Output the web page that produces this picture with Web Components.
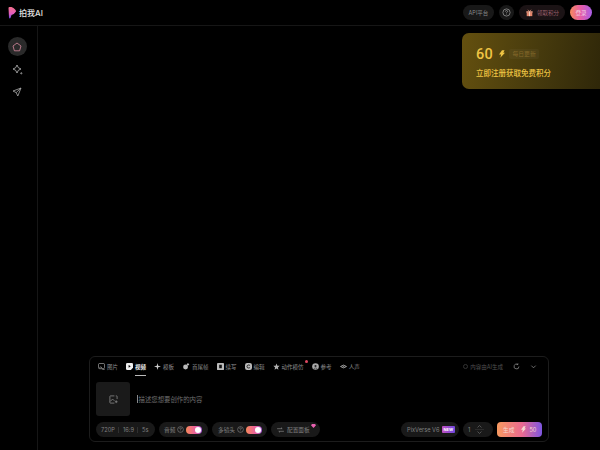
<!DOCTYPE html>
<html>
<head>
<meta charset="utf-8">
<style>
  html, body { margin: 0; height: 100%; background: #000; overflow: hidden; }
  body { font-family: Inter, "Noto Sans CJK SC", sans-serif; color: #fff; }
</style>
</head>
<body>
<template id="tpl-header">
  <style>
    :host { display: flex; align-items: center; height: 25px; border-bottom: 1px solid #161616; padding: 0 8px; box-sizing: content-box; }
    .logo { display: flex; align-items: center; gap: 3px; font-size: 8px; font-weight: 500; color: #e4e4e4; }
    .right { margin-left: auto; display: flex; align-items: center; gap: 5px; font-size: 5.5px; white-space: nowrap; }
    .pill { height: 15px; border-radius: 8px; background: #181818; color: #8a8a8a; display: flex; align-items: center; box-sizing: border-box; }
    .api { width: 31px; justify-content: center; }
    .help { width: 15px; justify-content: center; }
    .gift { background: #1b1315; color: #9c5f6c; padding: 0 6px 0 7px; gap: 4px; }
    .login { height: 15px; width: 22px; border-radius: 8px; background: linear-gradient(90deg, #f7895e, #e65ca8 50%, #a95ee8); color: #f3d6e2; display: flex; align-items: center; justify-content: center; }
  </style>
  <div class="logo">
    <svg width="8" height="12" viewBox="0 0 8 12"><defs><linearGradient id="lg" x1="0" y1="0" x2="0" y2="1"><stop offset="0" stop-color="#f5708a"/><stop offset=".6" stop-color="#e25cc0"/><stop offset="1" stop-color="#6a4ae0"/></linearGradient></defs><path d="M.5 1 Q.5 0 1.5 0 L3.5 0 Q8 2 8 4.5 Q6.5 7 3.5 8 L2.5 11 Q1.5 12 1 10.5 Z" fill="url(#lg)"/></svg>
    <span>拍我AI</span>
  </div>
  <div class="right">
    <div class="pill api">API平台</div>
    <div class="pill help"><svg width="9" height="9" viewBox="0 0 10 10" fill="none" stroke="#a0a0a0" stroke-width=".8"><circle cx="5" cy="5" r="4"/><path d="M3.8 4 Q3.8 2.8 5 2.8 Q6.2 2.8 6.2 3.9 Q6.2 4.6 5 5.2 V5.9"/><path d="M5 7 V7.5"/></svg></div>
    <div class="pill gift"><svg width="7" height="8" viewBox="0 0 10 10"><rect x="1" y="4" width="8" height="5.5" fill="#e4846a"/><rect x=".5" y="2.5" width="9" height="2" fill="#ec9a80"/><rect x="4.2" y="2.5" width="1.6" height="7" fill="#f5d0c0"/><path d="M5 2.5 L2.5 .5 M5 2.5 L7.5 .5" stroke="#ec9a80"/></svg><span>领取积分</span></div>
    <div class="login">登录</div>
  </div>
</template>

<template id="tpl-sidebar">
  <style>
    :host { display: flex; flex-direction: column; align-items: center; width: 34px; padding: 11px 3px 0 0; border-right: 1px solid #161616; gap: 3.5px; box-sizing: content-box; flex: none; }
    .item { width: 19px; height: 19px; border-radius: 50%; display: flex; align-items: center; justify-content: center; }
    .active { background: #2a2a2a; }
  </style>
  <div class="item active"><svg width="10" height="10" viewBox="0 0 10 10" fill="none" stroke="#d98aa0" stroke-width=".8"><path d="M5 1 L9 4 L7.6 8.8 H2.4 L1 4 Z" stroke-linejoin="round"/></svg></div>
  <div class="item"><svg width="11" height="11" viewBox="0 0 11 11" fill="none" stroke="#bbb" stroke-width=".8"><path d="M5 1 Q5.6 4.4 9 5 Q5.6 5.6 5 9 Q4.4 5.6 1 5 Q4.4 4.4 5 1 Z"/><circle cx="9.3" cy="9.3" r=".6"/></svg></div>
  <div class="item"><svg width="10" height="10" viewBox="0 0 10 10" fill="none" stroke="#aaa" stroke-width=".8" stroke-linejoin="round"><path d="M9 1 L1 4 L4.2 5.6 L5.8 9 Z M9 1 L4.2 5.6"/></svg></div>
</template>

<template id="tpl-card">
  <style>
    :host { display: block; width: 138px; height: 56px; box-sizing: border-box; border-radius: 7px 0 0 7px; background: linear-gradient(100deg, #64500f 0%, #463a0d 55%, #2f2709 100%); padding: 13px 0 0 14px; color: #f0c544; }
    .top { display: flex; align-items: center; height: 16px; }
    .num { font-family: Roboto, sans-serif; font-size: 14.5px; font-weight: 500; letter-spacing: .3px; width: 16px; }
    svg { margin-left: 7px; }
    .tag { margin-left: 4px; font-size: 5.8px; height: 10px; line-height: 10px; padding: 0 3.5px; background: rgba(255,255,255,.035); border-radius: 2px; color: #85692a; white-space: nowrap; }
    .sub { font-size: 7.5px; font-weight: 500; margin-top: 5px; }
  </style>
  <div class="top"><span class="num">60</span>
    <svg width="6" height="8" viewBox="0 0 7 9"><path d="M3.5 0 H6.5 L5 3 H7 L1.5 9 L2.5 5 H0 Z" fill="#f0c544"/></svg>
    <span class="tag">每日更新</span></div>
  <div class="sub">立即注册获取免费积分</div>
</template>

<template id="tpl-tab">
  <style>
    :host { display: flex; align-items: center; gap: 2px; font-size: 5.5px; color: #8e8e8e; position: relative; height: 100%; white-space: nowrap; }
    :host([active]) { color: #e8e8e8; font-weight: 600; }
    :host([active])::after { content: ""; position: absolute; left: 9px; right: 0; bottom: 0; height: 1px; background: #bbb; }
    :host([dot])::before { content: ""; position: absolute; width: 3px; height: 3px; border-radius: 50%; background: #e04860; top: 3px; right: -4px; }
    ::slotted(svg) { display: block; }
  </style>
  <slot name="icon"></slot><slot></slot>
</template>

<template id="tpl-chip">
  <style>
    :host { display: flex; align-items: center; height: 15px; border-radius: 8px; background: #191919; color: #808080; font-size: 5.7px; padding: 0 5px; gap: 2px; position: relative; box-sizing: border-box; flex: none; white-space: nowrap; }
    :host(.wide) { padding: 0 5px 0 6px; }
    :host(.panel) { padding-left: 6px; gap: 3px; }
  </style>
  <slot></slot>
</template>

<template id="tpl-toggle">
  <style>
    :host { display: block; width: 16px; height: 8px; border-radius: 4px; background: linear-gradient(90deg, #f8895a, #e860a0 60%, #a85ad8); position: relative; }
    :host::after { content: ""; position: absolute; width: 6px; height: 6px; right: 1px; top: 1px; border-radius: 50%; background: #fff; }
  </style>
</template>

<template id="tpl-composer">
  <style>
    :host { display: block; width: 460px; height: 86px; box-sizing: border-box; border: 1px solid #1c1c1c; border-radius: 6px; margin: 0 0 8px 51px; flex: none; }
    .tabs { display: flex; align-items: center; height: 19px; gap: 8px; padding: 0 8px; }
    .ai { margin-left: auto; display: flex; align-items: center; gap: 2.5px; font-size: 5.5px; color: #505050; white-space: nowrap; }
    .ai i { width: 5px; height: 5px; border: .7px solid #333; border-radius: 50%; display: block; box-sizing: border-box; }
    .tools { display: flex; align-items: center; gap: 10px; margin-left: 2px; padding-right: 3px; }
    .body { display: flex; gap: 7px; margin-top: 6px; height: 34px; padding: 0 6px; }
    .thumb { width: 34px; height: 34px; border-radius: 3px; background: #1a1a1a; display: flex; align-items: center; justify-content: center; flex: none; }
    .prompt { display: flex; align-items: center; height: 34px; font-size: 6.4px; color: #6e6e6e; }
    .prompt b { display: block; width: 1px; height: 8px; background: #888; margin-right: .5px; }
    .bottom { display: flex; align-items: center; margin-top: 6px; gap: 4px; padding: 0 6px; }
    .sep { width: 1px; height: 6px; background: #303030; margin: 0 1.5px; }
    .spacer { flex: 1; }
    .new { font-size: 4px; font-weight: 700; color: #fff; padding: 0 2px; height: 7px; width: 13px; box-sizing: border-box; text-align: center; line-height: 7px; border-radius: 1px; background: linear-gradient(90deg, #c050c0, #7048e0); }
    .count { justify-content: space-between; padding: 0 9px 0 5px; }
    .arrows { display: flex; flex-direction: column; align-items: center; gap: 1.5px; }
    .arrows i { display: block; height: .6px; width: 9px; background: #2c2c2c; }
    .arrows svg { display: block; }
    .gen { height: 15px; width: 45px; border-radius: 4px; background: linear-gradient(90deg, #f79a60, #ea6a90 55%, #7d56e0); color: #f6d8d0; font-size: 5.7px; display: flex; align-items: center; padding-left: 6px; box-sizing: border-box; flex: none; }
    .cost { display: flex; align-items: center; gap: 3px; margin-left: 7px; }
    .badge { position: absolute; top: 2px; right: 4px; }
  </style>
  <div class="tabs">
    <x-tab><svg slot="icon" width="7" height="7" viewBox="0 0 8 8" fill="none" stroke="#aaa" stroke-width=".8"><rect x=".5" y=".5" width="7" height="6" rx="1.5"/><path d="M1.5 6 L3 4.2 L4.8 6"/><path d="M5 7.6 H7.6"/></svg>图片</x-tab>
    <x-tab active><svg slot="icon" width="7" height="7" viewBox="0 0 8 8"><path d="M1.5 0 H6.5 Q8 0 8 1.5 V5.5 L5.5 8 H1.5 Q0 8 0 6.5 V1.5 Q0 0 1.5 0 Z" fill="#eee"/><path d="M3 2.2 L5.4 3.8 L3 5.4 Z" fill="#000"/></svg>视频</x-tab>
    <x-tab><svg slot="icon" width="7" height="7" viewBox="0 0 8 8" fill="#ccc"><path d="M4 0 L4.8 3.2 L8 4 L4.8 4.8 L4 8 L3.2 4.8 L0 4 L3.2 3.2 Z"/></svg>模板</x-tab>
    <x-tab><svg slot="icon" width="8" height="7" viewBox="0 0 8 8" fill="#bbb"><circle cx="3.5" cy="4.5" r="2.8"/><path d="M6.2 0 L7.8 1.6 L6.2 3.2 L4.6 1.6 Z"/></svg>首尾帧</x-tab>
    <x-tab><svg slot="icon" width="7" height="7" viewBox="0 0 8 8"><rect width="8" height="8" rx="1" fill="#bbb"/><rect x="2.5" y="2" width="3" height="4" fill="#111"/></svg>续写</x-tab>
    <x-tab><svg slot="icon" width="7" height="7" viewBox="0 0 8 8"><rect width="8" height="8" rx="2.5" fill="#bbb"/><path d="M5.8 3 Q5 2.2 3.8 2.3 Q2.3 2.6 2.3 4 Q2.3 5.6 3.8 5.7 Q5 5.8 5.8 5" fill="none" stroke="#111"/></svg>编辑</x-tab>
    <x-tab dot><svg slot="icon" width="7" height="7" viewBox="0 0 8 8" fill="#b0b0b0"><path d="M4 .5 L5 3 L7.6 3.2 L5.6 5 L6.2 7.6 L4 6.2 L1.8 7.6 L2.4 5 L.4 3.2 L3 3 Z"/></svg>动作模仿</x-tab>
    <x-tab><svg slot="icon" width="7" height="7" viewBox="0 0 8 8"><circle cx="4" cy="4" r="3.8" fill="#a8a8a8"/><circle cx="4" cy="3.4" r="1.2" fill="#222"/><path d="M2 6.4 Q4 4.8 6 6.4" fill="none" stroke="#222" stroke-width=".7"/></svg>参考</x-tab>
    <x-tab><svg slot="icon" width="7" height="7" viewBox="0 0 8 8" fill="none" stroke="#b0b0b0" stroke-width="1"><path d="M.6 4 Q4 .8 7.4 4 Q4 7.2 .6 4 Z"/><circle cx="4" cy="4" r=".4"/></svg>人声</x-tab>
    <div class="ai"><i></i>内容由AI生成</div>
    <div class="tools">
      <svg width="7" height="7" viewBox="0 0 8 8" fill="none" stroke="#999" stroke-width=".8"><path d="M6.8 4 A2.8 2.8 0 1 1 5.5 1.6 M5.6 .4 V1.8 H4.2"/></svg>
      <svg width="7" height="7" viewBox="0 0 8 8" fill="none" stroke="#999" stroke-width=".8"><path d="M1.5 3 L4 5.5 L6.5 3"/></svg>
    </div>
  </div>
  <div class="body">
    <div class="thumb"><svg width="9" height="9" viewBox="0 0 10 10" fill="none" stroke="#888" stroke-width=".9"><path d="M6 1 H1.5 Q1 1 1 1.5 V8.5 Q1 9 1.5 9 H6 M9 4.5 V1.5 Q9 1 8.5 1 H7.5"/><path d="M1.5 7 L4 4.5 L6 6.5"/><path d="M8 6 V9 M6.5 7.5 H9.5"/></svg></div>
    <div class="prompt"><b></b>描述您想要创作的内容</div>
  </div>
  <div class="bottom">
    <x-chip style="width:59px">720P<span class="sep"></span>16:9<span class="sep"></span>5s</x-chip>
    <x-chip style="width:49px">音频<svg width="7" height="7" viewBox="0 0 8 8" fill="none" stroke="#888" stroke-width=".7"><circle cx="4" cy="4" r="3.3"/><path d="M3 3.2 Q3 2.2 4 2.2 Q5 2.2 5 3.1 Q5 3.7 4 4.2 V4.8 M4 5.5 V6"/></svg><x-toggle></x-toggle></x-chip>
    <x-chip class="wide" style="width:55px">多镜头<svg width="7" height="7" viewBox="0 0 8 8" fill="none" stroke="#888" stroke-width=".7"><circle cx="4" cy="4" r="3.3"/><path d="M3 3.2 Q3 2.2 4 2.2 Q5 2.2 5 3.1 Q5 3.7 4 4.2 V4.8 M4 5.5 V6"/></svg><x-toggle></x-toggle></x-chip>
    <x-chip class="panel" style="width:49px"><svg width="7" height="6" viewBox="0 0 8 7" fill="none" stroke="#999" stroke-width=".7"><path d="M0 2 H6 L4.6 .7 M8 5 H2 L3.4 6.3"/></svg>配置面板<svg class="badge" width="5" height="4" viewBox="0 0 5 4"><path d="M1 0 H4 L5 1.3 L2.5 4 L0 1.3 Z" fill="#e860b0"/></svg></x-chip>
    <span class="spacer"></span>
    <x-chip class="wide" style="width:58px;justify-content:space-between">PixVerse V6<span class="new">NEW</span></x-chip>
    <x-chip class="count" style="width:30px">1<span class="arrows"><svg width="5" height="3" viewBox="0 0 5 3" fill="none" stroke="#777" stroke-width=".6"><path d="M.5 2.5 L2.5 .5 L4.5 2.5"/></svg><i></i><svg width="5" height="3" viewBox="0 0 5 3" fill="none" stroke="#777" stroke-width=".6"><path d="M.5 .5 L2.5 2.5 L4.5 .5"/></svg></span></x-chip>
    <div class="gen">生成<span class="cost"><svg width="5" height="7" viewBox="0 0 7 9"><path d="M3.5 0 H6.5 L5 3 H7 L1.5 9 L2.5 5 H0 Z" fill="#f6d8d0"/></svg>50</span></div>
  </div>
</template>

<template id="tpl-app">
  <style>
    :host { display: flex; flex-direction: column; height: 100vh; }
    .row { flex: 1; display: flex; min-height: 0; }
    main { flex: 1; display: flex; flex-direction: column; min-width: 0; }
    x-card { align-self: flex-end; margin-top: 7px; }
    .fill { flex: 1; }
  </style>
  <x-header></x-header>
  <div class="row">
    <x-sidebar></x-sidebar>
    <main>
      <x-card></x-card>
      <div class="fill"></div>
      <x-composer></x-composer>
    </main>
  </div>
</template>

<x-app></x-app>

<script>
  const fromTemplate = (tag, id) => {
    customElements.define(tag, class extends HTMLElement {
      constructor() {
        super()
        const el = document.querySelector(id).content.cloneNode(true)
        this.attachShadow({ mode: 'open' }).appendChild(el)
      }
    })
  }
  fromTemplate('x-tab', '#tpl-tab')
  fromTemplate('x-chip', '#tpl-chip')
  fromTemplate('x-toggle', '#tpl-toggle')
  fromTemplate('x-header', '#tpl-header')
  fromTemplate('x-sidebar', '#tpl-sidebar')
  fromTemplate('x-card', '#tpl-card')
  fromTemplate('x-composer', '#tpl-composer')
  fromTemplate('x-app', '#tpl-app')
</script>
</body>
</html>
